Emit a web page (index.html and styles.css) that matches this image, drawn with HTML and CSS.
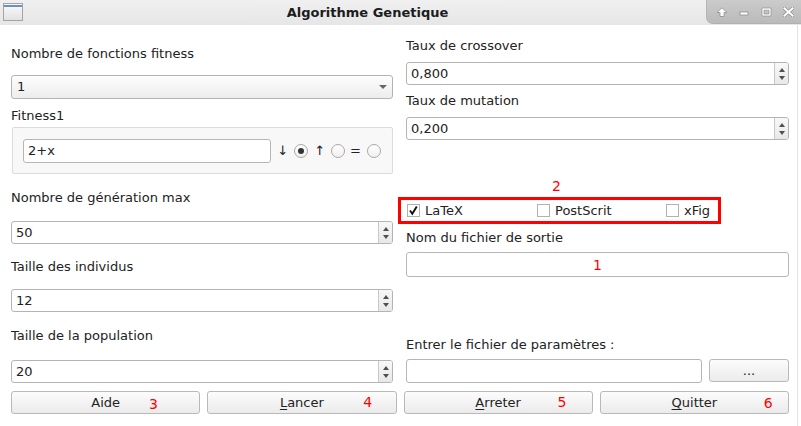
FILE: index.html
```html
<!DOCTYPE html>
<html lang="fr">
<head>
<meta charset="utf-8">
<title>Algorithme Genetique</title>
<link rel="stylesheet" href="styles.css">
</head>
<body>
<div class="window">
  <header class="titlebar">
    <div class="app-icon"></div>
    <div class="title">Algorithme Genetique</div>
    <div class="wm-controls">
      <span class="wm-slot"><svg width="12" height="10" viewBox="0 0 12 10"><path d="M1 5.5 L6 0.8 L11 5.5 L8 5.5 L8 9.5 L4 9.5 L4 5.5 Z" fill="#fff" stroke="#8e8e8e" stroke-width="0.8"/></svg></span>
      <span class="wm-slot"><svg width="10" height="10" viewBox="0 0 10 10"><rect x="1" y="5" width="8" height="3" fill="#fff" stroke="#8e8e8e" stroke-width="0.8"/></svg></span>
      <span class="wm-slot"><svg width="11" height="10" viewBox="0 0 11 10"><path d="M1 1 H10 V9 H1 Z M3 3.2 V7 H8 V3.2 Z" fill="#fff" fill-rule="evenodd" stroke="#8e8e8e" stroke-width="0.7"/></svg></span>
      <span class="wm-slot"><svg width="11" height="10" viewBox="0 0 11 10"><path d="M1.5 1.5 L9.5 8.5 M9.5 1.5 L1.5 8.5" stroke="#8e8e8e" stroke-width="3.4" stroke-linecap="square"/><path d="M1.5 1.5 L9.5 8.5 M9.5 1.5 L1.5 8.5" stroke="#fff" stroke-width="2" stroke-linecap="square"/></svg></span>
    </div>
  </header>

  <main class="content">
    <div class="columns">
      <section class="col">
        <div class="label mt21">Nombre de fonctions fitness</div>
        <div class="combo mt13"><span class="val">1</span><i class="combo-arrow"></i></div>
        <div class="label mt9">Fitness1</div>
        <div class="group mt3">
          <div class="lineedit fit-edit"><span class="val">2+x</span></div>
          <span class="sym ml6">↓</span>
          <span class="radio checked ml6"></span>
          <span class="sym ml6">↑</span>
          <span class="radio ml6"></span>
          <span class="sym ml5">=</span>
          <span class="radio ml6"></span>
        </div>
        <div class="label mt16">Nombre de génération max</div>
        <div class="spin mt15"><span class="val">50</span><span class="spin-btns"><i class="tri-up"></i><i class="tri-down"></i></span></div>
        <div class="label mt15">Taille des individus</div>
        <div class="spin mt14"><span class="val">12</span><span class="spin-btns"><i class="tri-up"></i><i class="tri-down"></i></span></div>
        <div class="label mt16">Taille de la population</div>
        <div class="spin mt16"><span class="val">20</span><span class="spin-btns"><i class="tri-up"></i><i class="tri-down"></i></span></div>
      </section>

      <section class="col">
        <div class="label mt13">Taux de crossover</div>
        <div class="spin mt8"><span class="val">0,800</span><span class="spin-btns"><i class="tri-up"></i><i class="tri-down"></i></span></div>
        <div class="label mt8">Taux de mutation</div>
        <div class="spin mt8"><span class="val">0,200</span><span class="spin-btns"><i class="tri-up"></i><i class="tri-down"></i></span></div>
        <div class="mark mark-two mt38">2</div>
        <div class="annot-box mt3">
          <label class="check-item"><span class="checkbox checked"><svg width="11" height="11" viewBox="0 0 11 11"><path d="M2 5.5 L4.3 8.8 L8.8 1.5" fill="none" stroke="#111" stroke-width="1.9"/></svg></span>LaTeX</label>
          <label class="check-item"><span class="checkbox"></span>PostScrit</label>
          <label class="check-item"><span class="checkbox"></span>xFig</label>
        </div>
        <div class="label mt6">Nom du fichier de sortie</div>
        <div class="lineedit out-edit mt6"><span class="mark">1</span></div>
        <div class="label mt60">Entrer le fichier de paramètres :</div>
        <div class="file-row mt6">
          <div class="lineedit file-edit"></div>
          <div class="btn browse">...</div>
        </div>
      </section>
    </div>

    <div class="buttons">
      <div class="btn">Aide<span class="mark btn-mark m3">3</span></div>
      <div class="btn"><u>L</u>ancer<span class="mark btn-mark m4">4</span></div>
      <div class="btn"><u>A</u>rreter<span class="mark btn-mark m5">5</span></div>
      <div class="btn"><u>Q</u>uitter<span class="mark btn-mark m6">6</span></div>
    </div>
  </main>
</div>
</body>
</html>
```

FILE: styles.css
```css
* { box-sizing: border-box; }
html, body { margin: 0; padding: 0; }
body {
  width: 801px;
  height: 426px;
  overflow: hidden;
  background: #ffffff;
  font-family: "DejaVu Sans", "Noto Sans", sans-serif;
  font-size: 13px;
  color: #222222;
}
.window { width: 801px; height: 426px; display: flex; flex-direction: column; }

/* title bar */
.titlebar {
  height: 25px;
  flex: none;
  display: flex;
  align-items: flex-start;
  background: linear-gradient(#f0f0f0, #e6e6e6);
}
.app-icon {
  width: 20px;
  height: 18px;
  margin: 3px 0 0 3px;
  border: 1px solid #a4a4a4;
  background: linear-gradient(#fbfbfb, #e2e2e2);
  box-shadow: inset 0 1px 0 #fafafa, inset 0 3px 0 #6a8fcf;
}
.title {
  flex: 1;
  text-align: center;
  font-weight: bold;
  line-height: 25px;
  padding-left: 6px;
  color: #1c1c1c;
}
.wm-controls {
  width: 95px;
  height: 24px;
  display: flex;
  align-items: center;
  padding-left: 4px;
  background: linear-gradient(#cbcbcb, #bababa);
  border-bottom-left-radius: 7px;
  border-left: 1px solid #b4b4b4;
  border-bottom: 1px solid #b0b0b0;
}
.wm-slot { width: 22px; display: flex; justify-content: center; align-items: center; }
.wm-slot svg { display: block; }

/* content */
.content {
  flex: 1;
  padding: 0 8px 0 11px;
  margin-right: 3px;
  border-right: 1px solid #e3e3e3;
}
.columns {
  display: grid;
  grid-template-columns: 382px 383px;
  column-gap: 13px;
  align-items: start;
}
.col { display: flex; flex-direction: column; }
.label { height: 16px; line-height: 16px; white-space: nowrap; }

.mt3 { margin-top: 3px; }
.mt6 { margin-top: 6px; }
.mt8 { margin-top: 8px; }
.mt9 { margin-top: 9px; }
.mt13 { margin-top: 13px; }
.mt14 { margin-top: 14px; }
.mt15 { margin-top: 15px; }
.mt16 { margin-top: 16px; }
.mt21 { margin-top: 21px; }
.mt38 { margin-top: 38px; }
.mt60 { margin-top: 60px; }
.ml5 { margin-left: 5px; }
.ml6 { margin-left: 6px; }

.val { line-height: 16px; white-space: nowrap; }

/* combo */
.combo {
  height: 24px;
  display: flex;
  align-items: center;
  padding-left: 5px;
  border: 1px solid #b4b4b4;
  border-radius: 3px;
  background: linear-gradient(#fdfdfd, #ededed);
}
.combo-arrow {
  margin-left: auto;
  margin-right: 5px;
  width: 0;
  height: 0;
  border-left: 4px solid transparent;
  border-right: 4px solid transparent;
  border-top: 4px solid #666;
}

/* group */
.group {
  height: 47px;
  margin-left: 1px;
  display: flex;
  align-items: center;
  padding: 0 11px 0 10px;
  border: 1px solid #dcdcdc;
  border-radius: 2px;
  background: #f8f8f8;
}
.lineedit {
  height: 24px;
  display: flex;
  align-items: center;
  padding-left: 4px;
  border: 1px solid #b6b6b6;
  border-radius: 3px;
  background: #fff;
}
.fit-edit { flex: 1; }
.sym { line-height: 16px; color: #222; }
.radio {
  width: 14px;
  height: 14px;
  flex: none;
  border: 1px solid #a9a9a9;
  border-radius: 50%;
  background: linear-gradient(#ffffff, #f1f1f1);
  display: flex;
  align-items: center;
  justify-content: center;
}
.radio.checked::after {
  content: "";
  width: 6px;
  height: 6px;
  border-radius: 50%;
  background: #333;
}

/* spin box */
.spin {
  height: 23px;
  display: flex;
  align-items: center;
  border: 1px solid #b4b4b4;
  border-radius: 3px;
  background: #fff;
  overflow: hidden;
}
.spin .val { flex: 1; padding-left: 4px; }
.spin-btns {
  width: 14px;
  align-self: stretch;
  border-left: 1px solid #c8c8c8;
  background: linear-gradient(#f8f8f8, #e8e8e8);
  display: flex;
  flex-direction: column;
  align-items: center;
  justify-content: center;
  gap: 4px;
}
.tri-up, .tri-down {
  width: 0;
  height: 0;
  border-left: 3.5px solid transparent;
  border-right: 3.5px solid transparent;
}
.tri-up { border-bottom: 4px solid #505050; }
.tri-down { border-top: 4px solid #505050; }

/* annotations */
.mark { color: #ff0000; font-size: 14px; line-height: 16px; }
.mark-two { height: 16px; padding-left: 146px; }
.annot-box {
  margin-left: -8px;
  width: 323px;
  height: 27px;
  border: 3px solid #ff0000;
  display: grid;
  grid-template-columns: 130px 129px auto;
  align-items: center;
  padding-left: 6px;
}
.check-item { display: flex; align-items: center; line-height: 16px; white-space: nowrap; }
.checkbox {
  width: 13px;
  height: 13px;
  flex: none;
  margin-right: 5px;
  border: 1px solid #b2b2b2;
  background: #fff;
  display: flex;
  align-items: center;
  justify-content: center;
}
.checkbox svg { display: block; }

.out-edit { height: 25px; justify-content: center; padding-left: 0; }

.file-row { display: flex; gap: 7px; height: 24px; }
.file-edit { flex: 1; }
.browse { width: 80px; flex: none; height: 24px; }

/* buttons */
.buttons {
  display: grid;
  grid-template-columns: repeat(4, 1fr);
  column-gap: 7px;
  margin-top: 8px;
}
.btn {
  position: relative;
  height: 23px;
  display: flex;
  align-items: center;
  justify-content: center;
  border: 1px solid #b9b9b9;
  border-radius: 3px;
  background: linear-gradient(#fcfcfc, #ebebeb);
  line-height: 16px;
  color: #222;
}
.btn u { text-decoration-thickness: 1px; text-underline-offset: 2px; }
.btn-mark { position: absolute; }
.m3 { left: 137px; top: 4px; }
.m4 { left: 155px; top: 2px; }
.m5 { left: 153px; top: 2px; }
.m6 { left: 163px; top: 3px; }
```
